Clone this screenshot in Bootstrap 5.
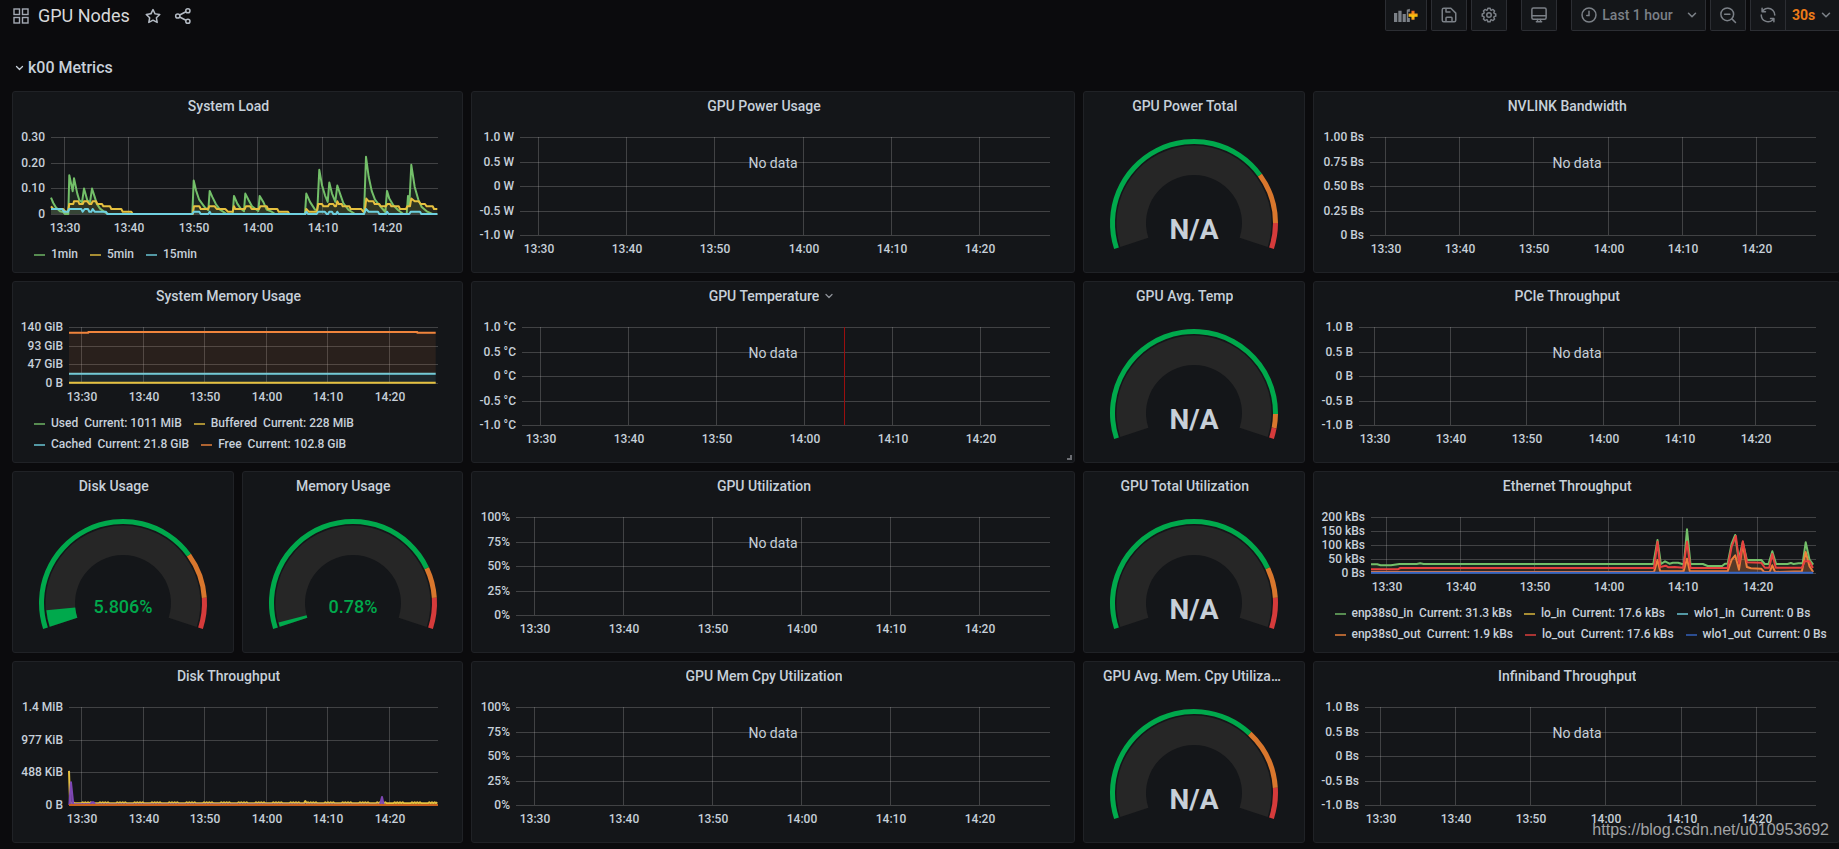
<!DOCTYPE html>
<html lang="en" data-bs-theme="dark">
<head>
<meta charset="utf-8">
<meta name="viewport" content="width=device-width, initial-scale=1">
<title>GPU Nodes</title>
<link href="https://cdn.jsdelivr.net/npm/bootstrap@5.3.0/dist/css/bootstrap.min.css" rel="stylesheet">
<style>
  body { background: #0b0b0d; color: #c7d0d9; font-family: Roboto, "Liberation Sans", sans-serif; font-size: 14px; line-height: 20px; overflow-x: hidden; }
  .topbar { height: 31px; margin-right: -2px; padding-left: 13px; }
  .dash-title { font-size: 18px; line-height: 24px; font-weight: 400; color: #d8d9da; margin: 0 14px 0 9px; }
  .plain { background: none; border: 0; color: inherit; padding: 0; display: flex; }
  .tool { height: 31px; min-width: 36px; padding: 0 8px; background: #141619; border: 1px solid #2c2e33; border-top: 0; border-radius: 0 0 2px 2px; color: #7b8087; font-size: 14px; font-weight: 500; display: flex; align-items: center; justify-content: center; }
  .tool-wide { width: 42px; }
  .tool-alone { margin: 0 14px; }
  .tool-range { width: 135px; padding-right: 6px; }
  .tool-join { border-radius: 0; }
  .tool-rate { color: #eb7b18; border-left: 0; width: 55px; padding: 0 6px; font-weight: 700; }
  .section-title { font-size: 16px; line-height: 24px; font-weight: 500; color: inherit; margin: 0; padding: 25px 0 11px 15px; }
  .board { display: grid; grid-template-columns: repeat(24, minmax(0, 1fr)); grid-auto-rows: 182px; gap: 8px; margin: 0 -1px 0 12px; }
  .w3 { grid-column: span 3; } .w6 { grid-column: span 6; } .w7 { grid-column: span 7; } .w8 { grid-column: span 8; }
  .panel { background: #141619; border: 1px solid #202226; border-radius: 3px; display: flex; flex-direction: column; padding-bottom: 7px; position: relative; min-width: 0; }
  .panel-head { height: 29px; padding: 0 19px 2px; display: flex; align-items: center; justify-content: safe center; }
  .panel-head h2 { font-size: 14px; line-height: 20px; font-weight: 500; color: inherit; margin: 0; flex: none; max-width: 100%; }
  .caret { width: 18px; flex: none; padding-right: 2px; display: flex; justify-content: flex-end; }
  .plot { flex: 1 1 0; min-height: 0; position: relative; }
  .plot svg { display: block; width: 100%; height: 100%; overflow: visible; }
  .plot text { fill: #c7d0d9; font-size: 12px; font-weight: 500; }
  .plot .empty { font-size: 14px; font-weight: 400; }
  .plot .reading { font-size: 28px; font-weight: 700; }
  .plot .reading-live { font-size: 18px; font-weight: 500; fill: #00a94c; }
  .keys { list-style: none; margin: 0; padding: 0 8px 0 21px; display: flex; flex-wrap: wrap; column-gap: 12px; font-size: 12px; line-height: 21px; font-weight: 500; }
  .keys li { display: flex; align-items: center; gap: 6px; white-space: nowrap; }
  .keys i { width: 11px; height: 2px; opacity: .7; }
  .grip { position: absolute; right: 2px; bottom: 2px; width: 5px; height: 5px; border: solid #6b6d72; border-width: 0 2px 2px 0; }
  .source { position: absolute; right: 10px; bottom: 2px; font: 16px/22px "Liberation Sans", Arial, sans-serif; color: #a2a3a5; text-decoration: none; }
</style>
</head>
<body>
<svg class="d-none" aria-hidden="true">
  <symbol id="down" viewBox="0 0 24 24"><path d="M6 9l6 6 6-6" fill="none" stroke="currentColor" stroke-width="2.6" stroke-linecap="round" stroke-linejoin="round"/></symbol>
</svg>

<header class="topbar d-flex align-items-start justify-content-between">
  <div class="d-flex align-items-center h-100">
    <svg width="16" height="16" viewBox="0 0 16 16" fill="none" stroke="#a3a9b3" stroke-width="1.4"><rect x="1" y="1" width="5.5" height="5.5"/><rect x="9.5" y="1" width="5.5" height="5.5"/><rect x="1" y="9.5" width="5.5" height="5.5"/><rect x="9.5" y="9.5" width="5.5" height="5.5"/></svg>
    <h1 class="dash-title">GPU Nodes</h1>
    <button class="plain me-2 pe-1" aria-label="Mark as favorite"><svg width="18" height="18" viewBox="0 0 24 24" fill="#b4bbc4"><path d="M22,9.67A1,1,0,0,0,21.14,9l-5.69-.83L12.9,3a1,1,0,0,0-1.8,0L8.55,8.16,2.86,9a1,1,0,0,0-.81.68,1,1,0,0,0,.25,1l4.13,4-1,5.68A1,1,0,0,0,6.9,21.44L12,18.77l5.1,2.67a.93.93,0,0,0,.46.12,1,1,0,0,0,.59-.19,1,1,0,0,0,.4-1l-1-5.68,4.13-4A1,1,0,0,0,22,9.67Zm-6.15,4a1,1,0,0,0-.29.88l.72,4.2-3.76-2a1.06,1.06,0,0,0-.94,0l-3.76,2,.72-4.2a1,1,0,0,0-.29-.88l-3-3,4.21-.61a1,1,0,0,0,.76-.55L12,5.7l1.88,3.82a1,1,0,0,0,.76.55l4.21.61Z"/></svg></button>
    <button class="plain" aria-label="Share dashboard"><svg width="18" height="18" viewBox="0 0 24 24" fill="none" stroke="#b4bbc4" stroke-width="2"><circle cx="5" cy="12" r="2.8"/><circle cx="18.5" cy="5" r="2.8"/><circle cx="18.5" cy="19" r="2.8"/><path d="M7.6 10.7l8.3-4.4M7.6 13.3l8.3 4.4"/></svg></button>
  </div>
  <div class="d-flex">
    <button class="tool tool-wide me-1" aria-label="Add panel"><svg width="25" height="15" viewBox="0 0 25 15"><defs><linearGradient id="warm" x1="0" y1="0" x2="0" y2="1"><stop offset="0" stop-color="#f05a28"/><stop offset=".6" stop-color="#fbca0a"/><stop offset="1" stop-color="#f5932a"/></linearGradient></defs><path fill="currentColor" d="M0 5h3.400v9.300H0zM4.500 2.500h3.400v11.800H4.500zM9 6h3.300v8.300H9zM13.300 1.500L16.500 .5v3.200h-1.700V10h1.700v4.300h-3.200z"/><path fill="url(#warm)" d="M18.200 2.500h3.200v3h3.200v3.200h-3.200v3.300h-3.200V8.700h-3V5.500h3z"/></svg></button>
    <button class="tool me-1" aria-label="Save dashboard"><svg width="18" height="18" viewBox="0 0 24 24" fill="none" stroke="currentColor" stroke-width="2" stroke-linejoin="round"><path d="M5 3h9.500L21 9.500V19a2 2 0 0 1-2 2H5a2 2 0 0 1-2-2V5a2 2 0 0 1 2-2zM8 3.500V8h6M8 21v-5a1 1 0 0 1 1-1h6a1 1 0 0 1 1 1v5"/></svg></button>
    <button class="tool" aria-label="Dashboard settings"><svg width="18" height="18" viewBox="0 0 24 24" fill="currentColor"><path d="M21.320,9.550l-1.890-.630.890-1.780A1,1,0,0,0,20.130,6L18,3.870a1,1,0,0,0-1.150-.190l-1.780.890-.630-1.890A1,1,0,0,0,13.500,2h-3a1,1,0,0,0-.950.680L8.920,4.570,7.140,3.680A1,1,0,0,0,6,3.870L3.870,6a1,1,0,0,0-.190,1.150l.890,1.780-1.890.630A1,1,0,0,0,2,10.500v3a1,1,0,0,0,.680.950l1.890.630-.890,1.780A1,1,0,0,0,3.870,18L6,20.130a1,1,0,0,0,1.150.190l1.780-.890.630,1.890a1,1,0,0,0,.950.680h3a1,1,0,0,0,.950-.680l.630-1.890,1.780.890A1,1,0,0,0,18,20.130L20.130,18a1,1,0,0,0,.190-1.150l-.890-1.780,1.890-.630A1,1,0,0,0,22,13.500v-3A1,1,0,0,0,21.320,9.550ZM20,12.780l-1.200.4A2,2,0,0,0,17.640,16l.570,1.140-1.100,1.100L16,17.640a2,2,0,0,0-2.790,1.160l-.4,1.200H11.220l-.4-1.200A2,2,0,0,0,8,17.640l-1.140.570-1.100-1.100L6.360,16A2,2,0,0,0,5.200,13.180L4,12.780V11.220l1.200-.4A2,2,0,0,0,6.360,8L5.790,6.890l1.100-1.100L8,6.360A2,2,0,0,0,10.820,5.200l.4-1.200h1.560l.4,1.200A2,2,0,0,0,16,6.360l1.140-.570,1.100,1.100L17.640,8a2,2,0,0,0,1.160,2.790l1.200.4ZM12,8a4,4,0,1,0,4,4A4,4,0,0,0,12,8Zm0,6a2,2,0,1,1,2-2A2,2,0,0,1,12,14Z"/></svg></button>
    <button class="tool tool-alone" aria-label="Cycle view mode"><svg width="18" height="18" viewBox="0 0 24 24" fill="none" stroke="currentColor" stroke-width="2" stroke-linecap="round"><rect x="2.500" y="2.500" width="19" height="15" rx="2"/><path d="M3 13h18M8.500 21h7M10 18v3M14 18v3"/></svg></button>
    <button class="tool tool-range me-1 justify-content-between"><svg width="18" height="18" viewBox="0 0 24 24" fill="none" stroke="currentColor" stroke-width="2" stroke-linecap="round"><circle cx="12" cy="12" r="9.300"/><path d="M12 7v5.500H9"/></svg><span>Last 1 hour</span><svg class="ms-2" width="14" height="14"><use href="#down"/></svg></button>
    <button class="tool me-1" aria-label="Zoom out time range"><svg width="18" height="18" viewBox="0 0 24 24" fill="none" stroke="currentColor" stroke-width="2" stroke-linecap="round"><circle cx="11" cy="11" r="8.500"/><path d="M17.200 17.200L22 22M7.500 11h7"/></svg></button>
    <button class="tool tool-join" aria-label="Refresh dashboard"><svg width="18" height="18" viewBox="0 0 24 24" fill="currentColor"><path d="M19.910,15.510H15.380a1,1,0,0,0,0,2h2.400A8,8,0,0,1,4,12a1,1,0,0,0-2,0,10,10,0,0,0,16.880,7.230V21a1,1,0,0,0,2,0V16.500A1,1,0,0,0,19.910,15.510ZM12,2A10,10,0,0,0,5.120,4.770V3a1,1,0,0,0-2,0V7.500a1,1,0,0,0,1,1h4.500a1,1,0,0,0,0-2H6.220A8,8,0,0,1,20,12a1,1,0,0,0,2,0A10,10,0,0,0,12,2Z"/></svg></button>
    <button class="tool tool-join tool-rate justify-content-start"><span class="me-1">30s</span><svg width="14" height="14" color="#7b8087"><use href="#down"/></svg></button>
  </div>
</header>

<main class="position-relative">
  <h2 class="section-title d-flex align-items-center"><svg class="me-1" width="9" height="12" viewBox="3 0 18 24"><use href="#down" width="24" height="24"/></svg>k00 Metrics</h2>
  <div class="board" id="board"></div>
  <a class="source" href="https://blog.csdn.net/u010953692">https://blog.csdn.net/u010953692</a>
</main>

<script src="https://cdn.jsdelivr.net/npm/bootstrap@5.3.0/dist/js/bootstrap.bundle.min.js"></script>
<script>
const GREEN = '#73bf69', YELLOW = '#e5c03f', CYAN = '#6ed0e0', ORANGE = '#ef843c', RED = '#e8413f', BLUE = '#3465c4', PURPLE = '#7d47b3';
const TIMES = ['13:30', '13:40', '13:50', '14:00', '14:10', '14:20'];
const SPAN = 60, FIRST = 2.05, STEP = 10;          // minutes

const pts = s => s.trim().split(/\s+/).map(p => p.split(',').map(Number));

// Low background writes with an occasional bump
const writes = (() => {
  const out = [[207, 348], [210, 440]];
  for (let x = 216, i = 0; x <= 1314; x += 4, i++) out.push([x, (i * i * 31 + i * 7) % 13 > 9 ? 442 : 445]);
  return out.map(p => p[0] > 912 && p[0] < 918 ? [p[0], 438] : p);
})();

const panels = [
  { w: 6, title: 'System Load', left: 38, y: ['0.30', '0.20', '0.10', '0'], keys: [[GREEN, '1min'], [YELLOW, '5min'], [CYAN, '15min']],
    box: [153, 1314, 641, 411], series: [
    { c: GREEN, p: pts('153,592 160,608 168,622 180,633 190,635 195,641 205,641 208,525 218,573 222,534 232,580 238,600 246,606 252,565 262,600 270,606 276,565 284,590 290,610 300,625 315,636 325,641 577,641 581,541 588,570 597,597 615,622 625,630 629,572 637,590 648,612 660,628 680,641 698,641 702,587 712,610 722,625 732,633 736,580 746,600 756,618 775,632 779,587 790,605 800,628 815,634 825,641 915,641 919,580 930,605 945,628 952,630 958,509 966,555 975,585 983,605 988,547 996,580 1006,605 1012,556 1020,580 1030,608 1045,628 1065,641 1092,641 1098,470 1106,530 1115,572 1125,598 1140,617 1156,635 1161,572 1168,595 1180,615 1195,630 1210,641 1220,641 1224,587 1228,615 1234,494 1244,560 1255,598 1265,620 1280,633 1297,641 1312,641') },
    { c: YELLOW, p: pts('153,618 160,626 190,626 196,634 204,634 208,611 220,611 222,603 235,603 238,611 248,611 252,603 262,603 268,611 274,611 278,603 288,603 292,611 306,611 310,618 330,618 334,626 364,626 368,634 394,634 398,641 578,641 582,618 598,618 602,626 624,626 628,618 644,618 650,626 676,626 684,634 698,634 702,618 706,626 734,626 738,618 750,618 755,626 777,626 781,618 800,618 804,626 832,626 836,634 864,634 868,641 916,641 919,626 926,634 950,634 955,611 966,611 970,618 984,618 988,611 1000,611 1004,618 1008,618 1012,603 1016,611 1025,611 1028,618 1048,618 1052,626 1084,626 1090,634 1094,634 1099,595 1106,603 1120,603 1124,611 1138,611 1142,618 1158,618 1162,611 1170,611 1174,618 1196,618 1200,626 1218,626 1222,618 1230,618 1234,595 1244,603 1256,603 1262,611 1275,611 1280,618 1298,618 1302,626 1312,626') },
    { c: CYAN, p: pts('153,626 186,626 192,634 204,634 208,626 244,626 248,634 254,626 264,626 268,634 274,634 278,626 284,634 318,634 322,641 577,641 582,634 598,634 602,641 625,641 629,634 633,641 915,641 919,634 924,641 950,641 955,634 974,634 980,641 984,641 988,634 996,634 1000,641 1008,641 1012,634 1016,641 1092,641 1098,626 1106,634 1134,634 1138,641 1158,641 1161,634 1166,641 1228,641 1232,634 1260,634 1264,641 1312,641') }] },
  { w: 8, title: 'GPU Power Usage', left: 48, y: ['1.0 W', '0.5 W', '0 W', '-0.5 W', '-1.0 W'], empty: true },
  { w: 3, title: 'GPU Power Total', gauge: [75, 91.7] },
  { w: 7, title: 'NVLINK Bandwidth', left: 56, y: ['1.00 Bs', '0.75 Bs', '0.50 Bs', '0.25 Bs', '0 Bs'], empty: true },

  { w: 6, title: 'System Memory Usage', left: 56, y: ['140 GiB', '93 GiB', '47 GiB', '0 B'],
    keys: [[GREEN, 'Used', '1011 MiB'], [YELLOW, 'Buffered', '228 MiB'], [CYAN, 'Cached', '21.8 GiB'], [ORANGE, 'Free', '102.8 GiB']],
    box: [207, 1314, 325, 157], series: [
    { c: CYAN, p: pts('207,297 1307,297') },
    { c: ORANGE, base: 297, p: pts('207,174 265,174 265,172 1252,172 1252,174 1307,174') },
    { c: YELLOW, p: pts('207,324 1307,324') }] },
  { w: 8, title: 'GPU Temperature', menu: true, left: 50, y: ['1.0 °C', '0.5 °C', '0 °C', '-0.5 °C', '-1.0 °C'], empty: true, cursor: 36.6 },
  { w: 3, title: 'GPU Avg. Temp', gauge: [92, 96.6] },
  { w: 7, title: 'PCIe Throughput', left: 45, y: ['1.0 B', '0.5 B', '0 B', '-0.5 B', '-1.0 B'], empty: true },

  { w: 3, title: 'Disk Usage', gauge: [75, 90], value: 5.806 },
  { w: 3, title: 'Memory Usage', gauge: [80, 90], value: 0.78 },
  { w: 8, title: 'GPU Utilization', left: 44, y: ['100%', '75%', '50%', '25%', '0%'], empty: true },
  { w: 3, title: 'GPU Total Utilization', gauge: [80, 90] },
  { w: 7, title: 'Ethernet Throughput', left: 57, y: ['200 kBs', '150 kBs', '100 kBs', '50 kBs', '0 Bs'],
    keys: [[GREEN, 'enp38s0_in', '31.3 kBs'], [YELLOW, 'lo_in', '17.6 kBs'], [CYAN, 'wlo1_in', '0 Bs'], [ORANGE, 'enp38s0_out', '1.9 kBs'], [RED, 'lo_out', '17.6 kBs'], [BLUE, 'wlo1_out', '0 Bs']],
    box: [207, 1501, 325, 157], series: [
    { c: GREEN, p: pts('207,299 225,299 235,302 265,302 290,298 340,298 350,296 360,298 1028,298 1040,226 1050,298 1062,290 1075,297 1085,294 1100,294 1112,298 1117,298 1126,194 1136,298 1172,298 1186,304 1228,304 1236,297 1244,297 1256,236 1266,211 1276,285 1288,232 1300,286 1342,286 1352,298 1363,298 1374,260 1385,298 1418,298 1428,295 1436,298 1450,296 1462,296 1471,233 1482,285 1493,300') },
    { c: ORANGE, fill: .2, p: pts('207,322 1030,322 1040,286 1048,320 1116,320 1126,282 1134,320 1244,320 1256,285 1266,272 1277,315 1288,240 1300,307 1312,311 1342,312 1350,322 1366,322 1374,302 1382,322 1460,320 1471,262 1482,305 1493,322') },
    { c: RED, p: pts('207,314 285,314 292,310 1030,310 1040,231 1048,307 1064,303 1072,308 1090,307 1115,309 1126,231 1136,310 1244,310 1256,245 1268,214 1278,296 1288,230 1300,293 1342,294 1352,309 1365,309 1374,268 1384,309 1460,309 1468,290 1482,290 1492,310') },
    { c: BLUE, p: pts('207,324 1493,324') }] },

  { w: 6, title: 'Disk Throughput', left: 56, y: ['1.4 MiB', '977 KiB', '488 KiB', '0 B'],
    box: [207, 1314, 450, 157], series: [
    { c: YELLOW, p: writes },
    { c: PURPLE, fill: .8, p: pts('208,450 213,382 220,448 271,448 275,442 281,442 285,448 1140,449 1146,426 1151,449') },
    { c: '#c9601f', p: pts('207,450 1314,450') }] },
  { w: 8, title: 'GPU Mem Cpy Utilization', left: 44, y: ['100%', '75%', '50%', '25%', '0%'], empty: true },
  { w: 3, title: 'GPU Avg. Mem. Cpy Utilization', gauge: [70, 90] },
  { w: 7, title: 'Infiniband Throughput', left: 51, y: ['1.0 Bs', '0.5 Bs', '0 Bs', '-0.5 Bs', '-1.0 Bs'], empty: true }
];

const board = document.getElementById('board');
for (const p of panels) {
  const keys = p.keys ? `<ul class="keys">${p.keys.map(([c, name, now]) =>
    `<li><i style="background:${c}"></i><span>${name}</span>${now ? `<span>Current: ${now}</span>` : ''}</li>`).join('')}</ul>` : '';
  const caret = p.menu ? '<svg width="12" height="12" color="#8e9299"><use href="#down"/></svg>' : '';
  board.insertAdjacentHTML('beforeend',
    `<section class="panel w${p.w}"><div class="panel-head"><h2 class="text-truncate">${p.title}</h2><span class="caret">${caret}</span></div><div class="plot"></div>${keys}${p.menu ? '<span class="grip"></span>' : ''}</section>`);
  p.el = board.lastElementChild.querySelector('.plot');
}

function chart(p, W, H) {
  const L = p.left, R = Math.round(W - 24), T = 16, B = H - 30, n = p.y.length - 1;
  const row = i => Math.round(T + (B - T) * i / n);
  const col = m => Math.floor(L + (R - L) * m / SPAN);
  let s = '<g stroke="#c8c8c8" stroke-opacity=".25" shape-rendering="crispEdges">';
  p.y.forEach((t, i) => s += `<path d="M${L} ${row(i) + .5}H${R}"/>`);
  TIMES.forEach((t, i) => s += `<path d="M${col(FIRST + STEP * i) + .5} ${T}V${B}"/>`);
  s += '</g>';
  if (p.series) {
    const [x0, x1, y0, y1] = p.box;
    const X = x => +(L + (R - L) * (x - x0) / (x1 - x0)).toFixed(1), Y = y => +(T + (B - T) * (y - y1) / (y0 - y1)).toFixed(1);
    for (const q of p.series) {
      const line = q.p.map(a => X(a[0]) + ' ' + Y(a[1])).join('L'), base = Y(q.base || y0);
      s += `<path fill="${q.c}" fill-opacity="${q.fill || .1}" d="M${line}L${X(q.p.at(-1)[0])} ${base}L${X(q.p[0][0])} ${base}Z"/>`;
      s += `<path fill="none" stroke="${q.c}" stroke-width="2" stroke-linejoin="round" d="M${line}"/>`;
    }
  }
  if (p.cursor) s += `<path stroke="#9a0f0f" shape-rendering="crispEdges" d="M${col(p.cursor) + .5} ${T}V${B}"/>`;
  p.y.forEach((t, i) => s += `<text text-anchor="end" x="${L - 6}" y="${row(i) + 4}">${t}</text>`);
  TIMES.forEach((t, i) => s += `<text text-anchor="middle" x="${col(FIRST + STEP * i) + 1}" y="${B + 18}">${t}</text>`);
  if (p.empty) s += `<text class="empty" text-anchor="middle" x="${W / 2}" y="47">No data</text>`;
  return s;
}

function gauge(p, W) {
  const cx = W / 2, cy = 102;
  const at = (r, pc) => { const a = (162 + 216 * pc / 100) * Math.PI / 180; return `${(cx + r * Math.cos(a)).toFixed(2)} ${(cy + r * Math.sin(a)).toFixed(2)}`; };
  const arc = (r0, r1, a, b, c) => { const big = (b - a) * 2.16 > 180 ? 1 : 0;
    return `<path fill="${c}" d="M${at(r1, a)}A${r1} ${r1} 0 ${big} 1 ${at(r1, b)}L${at(r0, b)}A${r0} ${r0} 0 ${big} 0 ${at(r0, a)}Z"/>`; };
  const [m, h] = p.gauge;
  let s = arc(48, 77.5, 0, 100, '#262626') + arc(79, 84, 0, m, '#00a94c') + arc(79, 84, m, h, '#d9772d') + arc(79, 84, h, 100, '#d63b3b');
  if (p.value) s += arc(48, 77, 0, Math.max(p.value, 1.5), '#00a94c');
  return s + (p.value
    ? `<text class="reading-live" text-anchor="middle" x="${cx}" y="112">${p.value}%</text>`
    : `<text class="reading" text-anchor="middle" x="${cx}" y="118">N/A</text>`);
}

function draw() {
  for (const p of panels) {
    const W = p.el.clientWidth, H = p.el.clientHeight;
    p.el.innerHTML = `<svg role="img" aria-label="${p.title}">${p.gauge ? gauge(p, W) : chart(p, W, H)}</svg>`;
  }
}
draw();
addEventListener('resize', draw);
</script>
</body>
</html>
